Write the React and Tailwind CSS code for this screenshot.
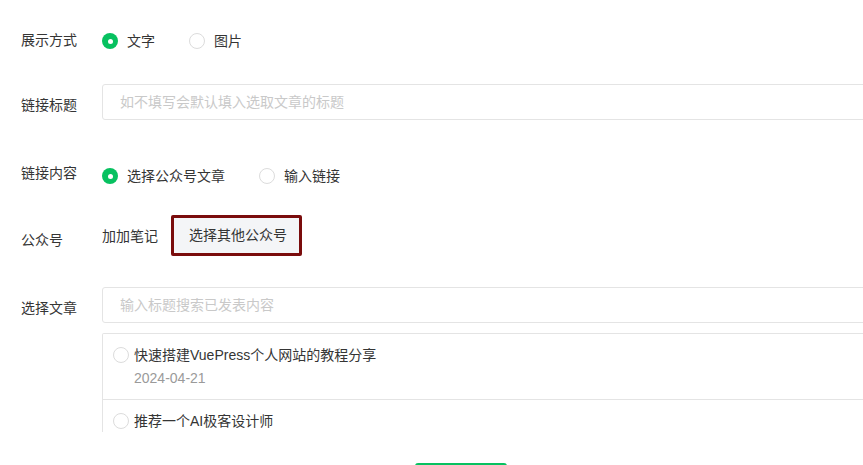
import { useState } from 'react';

const font = { fontFamily: '"Liberation Sans", "Noto Sans CJK SC", sans-serif' };

// 单选圆点
function Radio({ checked }) {
  return checked ? (
    <span className="flex h-4 w-4 shrink-0 items-center justify-center rounded-full bg-[#07c160]">
      <span className="h-[5px] w-[5px] rounded-full bg-white" />
    </span>
  ) : (
    <span className="block h-4 w-4 shrink-0 rounded-full border border-[#dcdcdc] bg-white" />
  );
}

function RadioGroup({ options, value, onChange }) {
  return (
    <div className="flex items-center gap-[34px]">
      {options.map((o) => (
        <label key={o} className="flex cursor-pointer items-center gap-[9px] leading-5" onClick={() => onChange(o)}>
          <Radio checked={value === o} />
          <span className="text-[#353535]">{o}</span>
        </label>
      ))}
    </div>
  );
}

const articles = [
  { title: '快速搭建VuePress个人网站的教程分享', date: '2024-04-21' },
  { title: '推荐一个AI极客设计师', date: '2024-04-18' },
];

export default function App() {
  const [mode, setMode] = useState('文字');
  const [src, setSrc] = useState('选择公众号文章');
  const [picked, setPicked] = useState(null);

  return (
    <div className="h-[465px] w-[863px] overflow-hidden bg-white pl-[21px] text-[14px] text-[#353535]" style={font}>
      {/* 展示方式 */}
      <div className="mt-[30px] flex h-5 items-center">
        <div className="w-[81px] shrink-0 leading-5">展示方式</div>
        <div className="pt-[2px]">
          <RadioGroup options={['文字', '图片']} value={mode} onChange={setMode} />
        </div>
      </div>

      {/* 链接标题 */}
      <div className="mt-[34px] flex items-start">
        <div className="w-[81px] shrink-0 pt-[11px] leading-5">链接标题</div>
        <input
          placeholder="如不填写会默认填入选取文章的标题"
          className="h-[36px] w-[800px] shrink-0 rounded-[3px] border border-[#e4e4e4] px-[17px] text-[14px] outline-none placeholder:text-[#c9c9c9]"
          style={font}
        />
      </div>

      {/* 链接内容 */}
      <div className="mt-[43px] flex items-start">
        <div className="w-[81px] shrink-0 leading-5">链接内容</div>
        <div className="pt-[3px]">
          <RadioGroup options={['选择公众号文章', '输入链接']} value={src} onChange={setSrc} />
        </div>
      </div>

      {/* 公众号 */}
      <div className="mt-[29px] flex items-start">
        <div className="w-[81px] shrink-0 pt-[15px] leading-5">公众号</div>
        <div className="flex h-[41px] items-center gap-[13px]">
          <span className="leading-5">加加笔记</span>
          <button
            className="h-[41px] w-[131px] rounded-[2px] border-[3px] border-[#7a0c0c] bg-[#f4f5f7] pl-[3px] text-[14px] text-[#353535]"
            style={font}
          >
            选择其他公众号
          </button>
        </div>
      </div>

      {/* 选择文章 */}
      <div className="mt-[31px] flex items-start">
        <div className="w-[81px] shrink-0 pt-[11px] leading-5">选择文章</div>
        <div className="w-[800px] shrink-0">
          <input
            placeholder="输入标题搜索已发表内容"
            className="h-[36px] w-full rounded-[3px] border border-[#e4e4e4] px-[17px] text-[14px] outline-none placeholder:text-[#c9c9c9]"
            style={font}
          />
          <div className="mt-[10px] h-[99px] overflow-hidden rounded-t-[2px] border-x border-t border-[#e4e4e4]">
            {articles.map((a, i) => (
              <div
                key={i}
                onClick={() => setPicked(i)}
                className={`flex cursor-pointer items-start gap-[5px] pb-[11px] pl-[10px] pt-[11px] ${i ? 'border-t border-[#e4e4e4]' : ''}`}
              >
                <div className="flex pt-[2px]">
                  <Radio checked={picked === i} />
                </div>
                <div className="leading-5">
                  <div className="text-[#353535]">{a.title}</div>
                  <div className="mt-[3px] text-[#9a9a9a]">{a.date}</div>
                </div>
              </div>
            ))}
          </div>
        </div>
      </div>

      {/* 底部按钮 */}
      <div className="mt-[31px] flex pl-[394px]">
        <button className="h-[36px] w-[92px] rounded-[3px] bg-[#07c160] text-white">确定</button>
      </div>
    </div>
  );
}
